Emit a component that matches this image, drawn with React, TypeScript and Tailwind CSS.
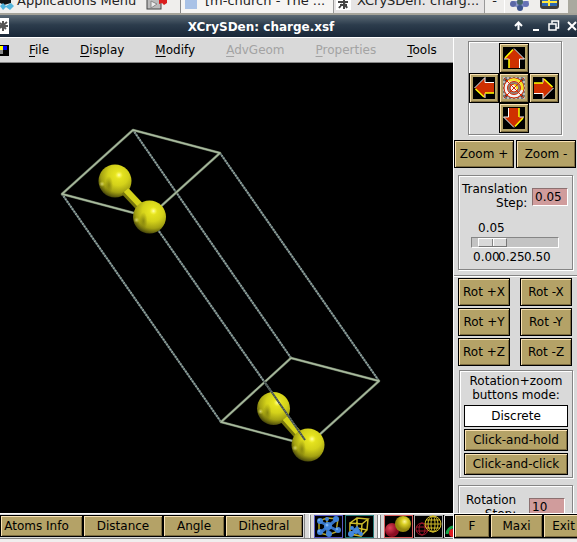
import React, { useState } from "react";

const tan =
  "border border-black bg-[#b4a267] text-xs text-black shadow-[inset_1px_1px_0_#fbe3b4,inset_-1px_-1px_0_#7d6c40]";
const groove =
  "border border-[#858585] shadow-[1px_1px_0_#fff,inset_1px_1px_0_#fff]";

function ToolButton({ children, className = "" }: { children: React.ReactNode; className?: string }) {
  return (
    <button type="button" className={`${tan} shrink-0 whitespace-nowrap ${className}`}>
      {children}
    </button>
  );
}

function ArrowButton({ turn, label, className }: { turn: number; label: string; className: string }) {
  return (
    <button
      type="button"
      aria-label={label}
      className={`${tan} flex size-[30px] items-center justify-center ${className}`}
    >
      <svg width="22" height="22" viewBox="0 0 22 22">
        <rect width="22" height="22" fill="#000" />
        <g transform={`rotate(${turn} 11 11)`}>
          <path d="M11 2 L21 12 H16 V21 H6 V12 H1 Z" fill="#cf3000" />
          <path d="M11 1.500 L21.500 12 H16.500 V21 M5.500 12 H1" fill="none" stroke="#fff" />
          <path d="M10 2.500 L2 11 M6 12 V21" fill="none" stroke="#ff0" strokeWidth="1.5" />
        </g>
      </svg>
    </button>
  );
}

function TargetIcon() {
  return (
    <svg width="22" height="22" viewBox="0 0 22 22">
      <defs>
        <pattern id="speckle" width="4" height="4" patternUnits="userSpaceOnUse">
          <rect width="4" height="4" fill="#777" />
          <rect width="2" height="2" fill="#b9b9b9" />
          <rect x="2" y="2" width="2" height="2" fill="#444" />
        </pattern>
      </defs>
      <rect width="22" height="22" fill="url(#speckle)" />
      <circle cx="11" cy="11" r="10" fill="#f2f2f2" stroke="#d32800" />
      <path d="M6 4 A8.500 8.500 0 0 1 19 13" fill="none" stroke="#f5e220" strokeWidth="2.5" />
      <circle cx="11" cy="11" r="6.5" fill="#8d8580" stroke="#d32800" />
      <circle cx="11" cy="11" r="4" fill="#f2f2f2" stroke="#d32800" />
      <path d="M11 8 A3 3 0 0 1 14 12" fill="none" stroke="#f5e220" strokeWidth="2" />
      <path d="M1 1 L21 21 M21 1 L1 21" stroke="#d32800" />
    </svg>
  );
}

function Taskbar() {
  return (
    <header className="flex h-[15px] shrink-0 items-end overflow-hidden bg-[#efeeec] text-[13px] text-[#222]">
      <div className="flex h-[27px] w-full shrink-0 items-center border-b-2 border-[#a5a399]">
        <button type="button" className="flex w-[180px] shrink-0 items-center whitespace-nowrap">
          <svg width="17" height="18" viewBox="0 0 17 18" className="shrink-0">
            <path d="M0 0 H11 V11 L4 13 L0 11 Z" fill="#111" />
            <path d="M0 14 L3 11 L6 14 L11 11 L14 14 L10 18 L6 15 L3 18 Z" fill="#52b4dc" />
          </svg>
          <span className="grow text-left">Applications Menu</span>
          <svg width="22" height="20" viewBox="0 0 22 20" className="mr-3 shrink-0">
            <rect x="1" y="1" width="14" height="17" fill="#bbb" stroke="#444" />
            <path d="M5 10 L11 13 L5 17 Z" fill="#eee" stroke="#888" />
            <path d="M13 3 H21 V12 L18 14 L16 12 L13 13 Z" fill="#d91d1d" />
          </svg>
        </button>
        <button type="button" className="flex h-full grow items-center gap-2 overflow-hidden whitespace-nowrap border-l border-[#888] bg-[#f6f5f3] pl-1">
          <svg width="12" height="16" viewBox="0 0 12 16" className="shrink-0">
            <rect width="12" height="16" fill="#a9c2e6" />
          </svg>
          [m-church - The ...
        </button>
        <button type="button" className="flex h-full w-[152px] shrink-0 items-center gap-[6px] whitespace-nowrap border-x border-[#999] bg-[#e6e4e4] pl-[2px]">
          <svg width="15" height="18" viewBox="0 0 15 18" className="shrink-0">
            <rect width="15" height="18" fill="#fff" />
            <path d="M2 10 H12 M4 13 H11 M8 7 V17 M3 16 L6 12 M11 16 L9 12" stroke="#444" strokeWidth="2" />
          </svg>
          XCrySDen: charg...
        </button>
        <span className="w-[19px] shrink-0 text-center">-</span>
        <div className="flex h-full w-[73px] shrink-0 items-center gap-2 border-l border-white pl-1">
          <svg width="22" height="22" viewBox="0 0 22 22" className="shrink-0">
            <path d="M2 11 H20 L17 16 L11 19 L5 16 Z" fill="#8793c8" />
            <circle cx="4" cy="14" r="3" fill="#5b68a6" />
            <circle cx="11" cy="18" r="3" fill="#3c548d" />
            <circle cx="17" cy="14" r="3" fill="#6672b5" />
            <circle cx="11" cy="12" r="3" fill="#466" />
          </svg>
          <svg width="21" height="21" viewBox="0 0 21 21" className="shrink-0">
            <rect x="1" y="0" width="19" height="19" rx="3" fill="#3f3f3c" />
            <rect x="3" y="1" width="15" height="15" fill="#2c68b1" />
            <path d="M3 12 H18 M10 5 V16" stroke="#ffe840" strokeWidth="2" />
          </svg>
          <span className="h-full grow bg-[#aaa99f]" />
        </div>
      </div>
    </header>
  );
}

function TitleBar() {
  return (
    <div className="flex h-[22px] shrink-0 items-center bg-linear-to-b from-[#5d6b76] via-[#2c3c4c] via-45% to-[#192738] text-white">
      <svg width="9" height="16" viewBox="0 0 9 16" className="shrink-0">
        <rect width="9" height="16" fill="#fff" />
        <path d="M0 5 L6 11 M0 10 L7 4 M3 3 V13 M0 8 H8" stroke="#555" strokeWidth="2" />
      </svg>
      <h1 className="grow whitespace-nowrap pt-[2px] text-center text-xs font-bold">
        XCrySDen: charge.xsf
      </h1>
      <div className="flex w-[64px] shrink-0 items-center gap-[7px]">
        <button type="button" aria-label="Shade" className="shrink-0">
          <svg width="11" height="12" viewBox="0 0 11 12">
            <path d="M5.500 10 V3 M2 6 L5.500 2.500 L9 6" fill="none" stroke="#fff" strokeWidth="2" />
          </svg>
        </button>
        <button type="button" aria-label="Minimize" className="shrink-0">
          <svg width="10" height="12" viewBox="0 0 10 12">
            <rect x="2" y="9" width="6" height="2" fill="#fff" />
          </svg>
        </button>
        <button type="button" aria-label="Restore" className="shrink-0">
          <svg width="12" height="12" viewBox="0 0 12 12" fill="none" stroke="#fff">
            <path d="M4 3.500 V1 H10.500 V8 H8" strokeWidth="1.500" />
            <rect x="1" y="4" width="7" height="6" strokeWidth="1.500" />
          </svg>
        </button>
        <button type="button" aria-label="Close" className="shrink-0">
          <svg width="10" height="12" viewBox="0 0 10 12">
            <path d="M1 2 L9 10 M9 2 L1 10" stroke="#fff" strokeWidth="2" />
          </svg>
        </button>
      </div>
    </div>
  );
}

const menus = [
  { name: "File", off: false },
  { name: "Display", off: false },
  { name: "Modify", off: false },
  { name: "AdvGeom", off: true },
  { name: "Properties", off: true },
  { name: "Tools", off: false },
];

function MenuBar() {
  return (
    <nav className="flex h-[25px] shrink-0 items-center overflow-hidden border-b border-[#858585] bg-[#d9d9d9] text-xs">
      <svg width="9" height="11" viewBox="0 0 9 11" className="mr-5 shrink-0" shapeRendering="crispEdges">
        <rect width="9" height="11" fill="#000" />
        <rect y="1" width="3" height="4" fill="#ff0" />
        <rect x="3" y="1" width="4" height="4" fill="#00f" />
        <rect y="5" width="3" height="4" fill="#888" />
      </svg>
      <div className="flex gap-[31px]">
        {menus.map((m) => (
          <button key={m.name} type="button" disabled={m.off} className="text-black disabled:text-[#a3a3a3]">
            <span className="underline underline-offset-2">{m.name[0]}</span>
            {m.name.slice(1)}
          </button>
        ))}
      </div>
    </nav>
  );
}

function Atom({ x, y }: { x: number; y: number }) {
  return (
    <g>
      <circle cx={x} cy={y} r="16.5" fill="url(#atom)" />
      <ellipse cx={x - 6} cy={y + 4} rx="4" ry="9" fill="url(#shade)" />
      <circle cx={x + 4} cy={y - 6} r="4" fill="url(#glint)" />
      <circle cx={x - 13} cy={y + 3} r="3" fill="url(#glint)" opacity="0.6" />
    </g>
  );
}

function Edge({ d }: { d: string }) {
  return (
    <g fill="none">
      <path d={d} stroke="#5f7075" strokeWidth="2" />
      <path d={d} stroke="#a3b3a2" strokeWidth="2" strokeDasharray="1 2" />
    </g>
  );
}

const faces = "M62 194 L133 130 L220 153 L149 217 Z M221 422 L291 358 L379 381 L308 445 Z";

function Viewer() {
  return (
    <main className="min-h-0 grow overflow-hidden bg-black">
      <svg width="453" height="450" viewBox="0 63 453 450" role="img" aria-label="Crystal cell with four atoms">
        <defs>
          <radialGradient id="atom" cx="0.6" cy="0.32" r="0.7">
            <stop offset="0" stopColor="#eeec22" />
            <stop offset="0.45" stopColor="#d4d21a" />
            <stop offset="0.75" stopColor="#a3a112" />
            <stop offset="1" stopColor="#46450a" />
          </radialGradient>
          <radialGradient id="shade">
            <stop offset="0" stopColor="#6a6908" stopOpacity="0.6" />
            <stop offset="1" stopColor="#6a6908" stopOpacity="0" />
          </radialGradient>
          <radialGradient id="glint">
            <stop offset="0" stopColor="#fffdb8" />
            <stop offset="1" stopColor="#fffd40" stopOpacity="0" />
          </radialGradient>
        </defs>
        <Edge d="M62 194 L221 422" />
        <Edge d="M133 130 L291 358" />
        <Edge d="M220 153 L379 381" />
        <Edge d="M149 217 L305 440" />
        <g fill="none" strokeLinejoin="round">
          <path d={faces} stroke="#65735f" strokeWidth="2.5" />
          <path d={faces} stroke="#aabc9f" strokeWidth="1.5" />
        </g>
        <Atom x={115} y={181} />
        <path d="M125 191 L141 208" stroke="#77760c" strokeWidth="9" />
        <path d="M126 190 L142 207" stroke="#d4d31a" strokeWidth="6" />
        <Atom x={149.5} y={217} />
        <Atom x={273.5} y={408.5} />
        <path d="M284 419 L300 437" stroke="#77760c" strokeWidth="9" />
        <path d="M285 418 L301 436" stroke="#d4d31a" strokeWidth="6" />
        <Atom x={308} y={445} />
        <path d="M264 381 L305 440" stroke="#414c4f" strokeWidth="2" />
        <path d="M264 381 L305 440" stroke="#8b9784" strokeWidth="1" strokeDasharray="1 2" />
      </svg>
    </main>
  );
}

function BallsIcon() {
  return (
    <svg width="29" height="23" viewBox="0 0 29 23">
      <rect x="0.5" y="0.5" width="28" height="22" fill="#000" stroke="#5a5ac4" />
      <path d="M5 6 L13 3 L24 4 L22 17 L14 20 L5 18 Z M13 3 V20" stroke="#b3a52a" strokeWidth="1.5" fill="none" />
      <path d="M5 6 L24 16 M23 4 L6 18 M14 11 V19" stroke="#3472c4" strokeWidth="3" fill="none" />
      <g fill="#3f82d8">
        <circle cx="6" cy="6" r="3" /><circle cx="13" cy="4" r="2" /><circle cx="22" cy="4" r="3" /><circle cx="14" cy="11" r="4" />
        <circle cx="6" cy="17" r="3" /><circle cx="15" cy="19" r="3" /><circle cx="24" cy="15" r="3" />
      </g>
      <g fill="#7db3f0">
        <circle cx="5" cy="5" r="1" /><circle cx="13" cy="10" r="1.5" /><circle cx="5" cy="16" r="1" /><circle cx="23" cy="14" r="1" />
      </g>
    </svg>
  );
}

function CellIcon() {
  return (
    <svg width="29" height="23" viewBox="0 0 29 23">
      <rect x="0.5" y="0.5" width="28" height="22" fill="#000" stroke="#287a78" />
      <path d="M5 8 L17 9 L16 21 L5 19 Z M5 8 L12 3 L23 4 L17 9 M23 4 L22 15 L16 21 M12 3 V13 L22 15" fill="none" stroke="#cbbb2b" strokeWidth="1.5" />
      <path d="M6 19 L12 13 L15 19" stroke="#3979cf" strokeWidth="3" fill="none" />
      <g fill="#4388dc">
        <circle cx="7" cy="13" r="2" /><circle cx="6" cy="19" r="3" /><circle cx="11" cy="16" r="3" /><circle cx="16" cy="19" r="2" />
      </g>
    </svg>
  );
}

function SolidIcon() {
  return (
    <svg width="29" height="23" viewBox="0 0 29 23">
      <defs>
        <radialGradient id="red" cx="0.35" cy="0.35">
          <stop offset="0" stopColor="#df4458" />
          <stop offset="1" stopColor="#8c0c22" />
        </radialGradient>
        <radialGradient id="gold" cx="0.6" cy="0.35">
          <stop offset="0" stopColor="#fff59a" />
          <stop offset="0.4" stopColor="#d8ce22" />
          <stop offset="1" stopColor="#96890e" />
        </radialGradient>
      </defs>
      <rect x="0.5" y="0.5" width="28" height="22" fill="#000" stroke="#d86060" />
      <circle cx="8" cy="15" r="7" fill="url(#red)" />
      <circle cx="19" cy="9" r="8" fill="url(#gold)" />
    </svg>
  );
}

function WireIcon() {
  return (
    <svg width="29" height="23" viewBox="0 0 29 23" fill="none">
      <rect x="0.5" y="0.5" width="28" height="22" fill="#000" stroke="#aaa" />
      <g stroke="#a5162c">
        <circle cx="8" cy="14" r="6" /><ellipse cx="8" cy="14" rx="3" ry="6" /><path d="M2 12 H14 M2 16 H14" />
      </g>
      <g stroke="#d3bd28">
        <circle cx="19" cy="9" r="8" /><ellipse cx="19" cy="9" rx="5" ry="8" /><ellipse cx="19" cy="9" rx="2" ry="8" />
        <path d="M11 9 H27 M12 5 H26 M12 13 H26" />
      </g>
    </svg>
  );
}

function IconButton({ label, children }: { label: string; children: React.ReactNode }) {
  return (
    <button type="button" aria-label={label} className="h-[23px] shrink-0">
      {children}
    </button>
  );
}

function BottomTools() {
  return (
    <footer className="flex h-[26px] shrink-0 overflow-hidden border-y border-t-white border-b-[#858585] bg-[#d9d9d9]">
      <div className="flex shrink-0 border-r border-[#858585] py-[1px] pr-[1px]">
        <ToolButton className="w-[83px] pr-[10px]">Atoms Info</ToolButton>
        <ToolButton className="w-20">Distance</ToolButton>
        <ToolButton className="w-[62px]">Angle</ToolButton>
        <ToolButton className="w-[78px]">Dihedral</ToolButton>
      </div>
      <div className="ml-1 flex grow gap-[2px] overflow-hidden border-l border-white pt-[1px]">
        <span className="w-[2px] shrink-0 border-l border-[#858585]" />
        <div className="flex shrink-0 gap-[2px] bg-black">
          <IconButton label="Balls and sticks"><BallsIcon /></IconButton>
          <IconButton label="Unit cell"><CellIcon /></IconButton>
        </div>
        <span className="mx-[1px] w-1 shrink-0 border-x border-[#858585] bg-white" />
        <div className="flex grow gap-[1px] overflow-hidden bg-black">
          <IconButton label="Solid spheres"><SolidIcon /></IconButton>
          <IconButton label="Wire spheres"><WireIcon /></IconButton>
          <IconButton label="Spacefill">
            <svg width="9" height="23" viewBox="0 0 9 23">
              <path d="M9 .5 H.5 V22.500 H9" fill="#000" stroke="#ddd" />
              <path d="M9 12 Q4 13 3 19" stroke="#13a549" strokeWidth="3" fill="none" />
              <circle cx="9" cy="18" r="4" fill="#e01b22" />
            </svg>
          </IconButton>
        </div>
      </div>
    </footer>
  );
}

const entry =
  "border border-[#8b7070] border-r-white border-b-white bg-[#d09c9c] px-[2px] text-xs text-black outline-none";

function SidePanel() {
  const [step, setStep] = useState("0.05");
  const [angle, setAngle] = useState("10");
  const [mode, setMode] = useState("Discrete");
  return (
    <aside className="flex w-[124px] shrink-0 flex-col border-l border-white bg-[#d9d9d9] text-xs text-black">
      <div className="min-h-0 grow overflow-hidden">
        <div className="border-b border-[#858585] pt-[3px] shadow-[0_1px_0_#fff]">
          <div className={`ml-[14px] grid w-[94px] grid-cols-[30px_30px_30px] py-[1px] ${groove}`}>
            <ArrowButton turn={0} label="Up" className="col-start-2" />
            <ArrowButton turn={-90} label="Left" className="col-start-1" />
            <button type="button" aria-label="Center" className={`${tan} flex size-[30px] items-center justify-center`}>
              <TargetIcon />
            </button>
            <ArrowButton turn={90} label="Right" className="" />
            <ArrowButton turn={180} label="Down" className="col-start-2" />
          </div>
          <div className="mt-[5px] flex gap-[2px]">
            <ToolButton className="h-7 w-[60px]">Zoom +</ToolButton>
            <ToolButton className="h-7 w-[60px]">Zoom -</ToolButton>
          </div>
          <div className={`mx-1 mt-[7px] mb-[5px] h-[95px] pt-[6px] ${groove}`}>
            <div className="flex justify-between pr-1 pl-[3px]">
              <label htmlFor="step" className="text-right leading-[14px]">
                Translation
                <br />
                Step:
              </label>
              <input id="step" value={step} onChange={(e) => setStep(e.target.value)} className={`${entry} mt-[6px] h-[18px] w-9`} />
            </div>
            <div className="mt-[10px] ml-[12px] w-[88px]">
              <div className="pl-[7px] leading-4">{step}</div>
              <input
                type="range"
                aria-label="Translation step"
                min="0"
                max="0.5"
                step="0.01"
                value={step}
                onChange={(e) => setStep(e.target.value)}
                className="mt-[1px] block h-[11px] w-full appearance-none border border-[#858585] border-r-white border-b-white bg-[#c3c3c3] [&::-webkit-slider-thumb]:h-[9px] [&::-webkit-slider-thumb]:w-[29px] [&::-webkit-slider-thumb]:appearance-none [&::-webkit-slider-thumb]:border [&::-webkit-slider-thumb]:border-white [&::-webkit-slider-thumb]:border-r-[#777] [&::-webkit-slider-thumb]:border-b-[#777] [&::-webkit-slider-thumb]:bg-[linear-gradient(90deg,#d9d9d9_13px,#858585_13px,#858585_14px,#fff_14px,#fff_15px,#d9d9d9_15px)]"
              />
              <div className="flex pl-[2px] leading-[18px]">
                <span className="w-[25px]">0.00</span>
                <span className="w-[26px]">0.25</span>
                <span>0.50</span>
              </div>
            </div>
          </div>
        </div>
        <div className="mx-1 mt-[2px] grid grid-cols-[52px_52px] justify-between gap-y-[2px] pr-[1px]">
          {["Rot +X", "Rot -X", "Rot +Y", "Rot -Y", "Rot +Z", "Rot -Z"].map((t) => (
            <ToolButton key={t} className="h-7">{t}</ToolButton>
          ))}
        </div>
        <fieldset className={`mr-1 ml-[5px] mt-1 px-[5px] pt-[3px] pb-[2px] ${groove}`}>
          <div className="text-center leading-[14px] whitespace-nowrap">
            Rotation+zoom
            <br />
            buttons mode:
          </div>
          <div className="-mx-[1px] mt-[3px] flex flex-col gap-[2px]">
            {["Discrete", "Click-and-hold", "Click-and-click"].map((m) => (
              <label
                key={m}
                className="flex h-[22px] items-center justify-center border border-black bg-[#b4a267] whitespace-nowrap shadow-[inset_1px_1px_0_#fbe3b4,inset_-1px_-1px_0_#7d6c40] has-checked:bg-white has-checked:shadow-none"
              >
                <input type="radio" name="mode" value={m} checked={mode === m} onChange={() => setMode(m)} className="sr-only" />
                {m}
              </label>
            ))}
          </div>
        </fieldset>
        <div className={`mx-1 mt-[7px] flex justify-between px-[7px] pt-[7px] pb-3 ${groove}`}>
          <label htmlFor="angle" className="text-right leading-[14px]">
            Rotation
            <br />
            Step:
          </label>
          <input id="angle" value={angle} onChange={(e) => setAngle(e.target.value)} className={`${entry} mt-[5px] h-[18px] w-9`} />
        </div>
      </div>
      <div className="flex h-[26px] shrink-0 overflow-hidden border-y border-t-white border-b-[#858585]">
        <ToolButton className="w-9">F</ToolButton>
        <ToolButton className="w-[53px]">Maxi</ToolButton>
        <ToolButton className="w-[41px]">Exit</ToolButton>
      </div>
    </aside>
  );
}

export default function App() {
  return (
    <div className="flex h-screen flex-col overflow-hidden bg-[#f0eeee] pb-[3px] font-['DejaVu_Sans',sans-serif]">
      <Taskbar />
      <TitleBar />
      <div className="flex min-h-0 grow border-t border-white">
        <div className="flex min-w-0 grow flex-col">
          <MenuBar />
          <Viewer />
          <BottomTools />
        </div>
        <SidePanel />
      </div>
    </div>
  );
}
